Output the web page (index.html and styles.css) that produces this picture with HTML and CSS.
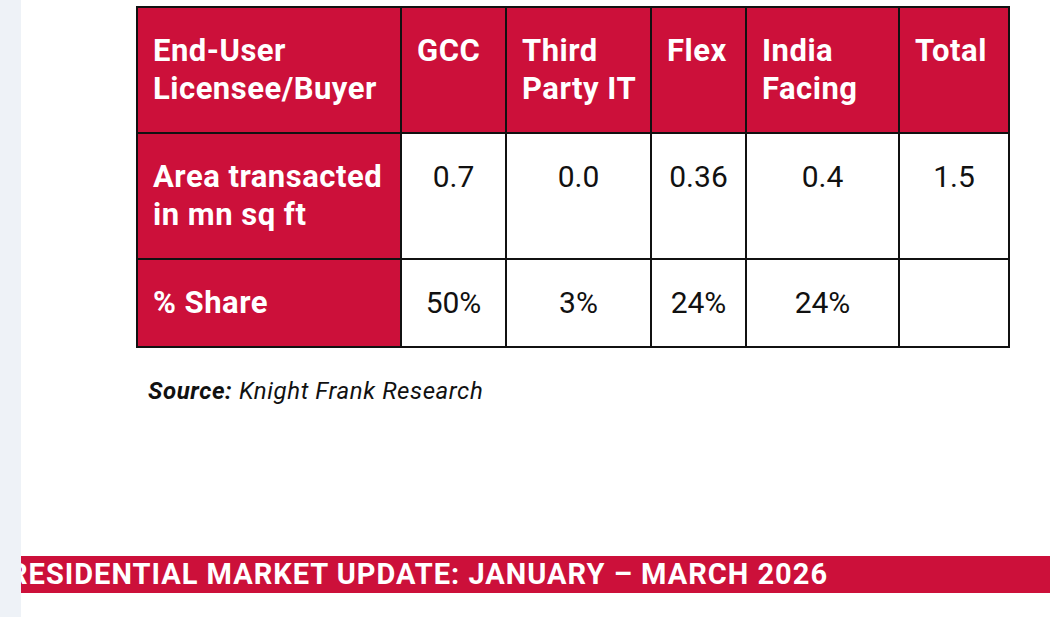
FILE: index.html
```html
<!DOCTYPE html>
<html lang="en">
<head>
<meta charset="utf-8">
<title>Office Market Table</title>
<link rel="stylesheet" href="styles.css">
</head>
<body>
<div class="page">
  <aside class="rail"></aside>
  <main class="content">
    <table class="data-table">
      <colgroup>
        <col class="c1"><col class="c2"><col class="c3"><col class="c4"><col class="c5"><col class="c6">
      </colgroup>
      <tr class="head-row">
        <th class="label">End-User<br>Licensee/Buyer</th>
        <th>GCC</th>
        <th>Third<br>Party IT</th>
        <th>Flex</th>
        <th>India<br>Facing</th>
        <th>Total</th>
      </tr>
      <tr class="row-tall">
        <th class="label">Area transacted<br>in mn sq ft</th>
        <td>0.7</td>
        <td>0.0</td>
        <td>0.36</td>
        <td>0.4</td>
        <td>1.5</td>
      </tr>
      <tr class="row-short">
        <th class="label">% Share</th>
        <td>50%</td>
        <td>3%</td>
        <td>24%</td>
        <td>24%</td>
        <td></td>
      </tr>
    </table>
    <p class="source"><strong>Source:</strong> Knight Frank Research</p>
    <div class="banner"><span class="banner-text">RESIDENTIAL MARKET UPDATE: JANUARY – MARCH 2026</span></div>
  </main>
</div>
</body>
</html>
```
FILE: styles.css
```css
html, body {
  margin: 0;
  padding: 0;
  background: #ffffff;
  font-family: Roboto, "Liberation Sans", sans-serif;
}
.page {
  display: flex;
  width: 1050px;
  height: 617px;
  overflow: hidden;
}
.rail {
  width: 21px;
  flex: 0 0 21px;
  background: #eef2f7;
}
.content {
  flex: 1;
  overflow: hidden;
  padding-top: 6px;
}
.data-table {
  margin-left: 115px;
  border-collapse: collapse;
  table-layout: fixed;
  width: 872px;
}
.c1 { width: 264px; }
.c2 { width: 105px; }
.c3 { width: 145px; }
.c4 { width: 95px; }
.c5 { width: 153px; }
.c6 { width: 110px; }
.data-table th,
.data-table td {
  border: 2px solid #111111;
  padding: 24px 10px 24px 15px;
  vertical-align: top;
  line-height: 38px;
}
.data-table th {
  background: #cc103a;
  color: #ffffff;
  font-size: 31px;
  font-weight: 700;
  letter-spacing: 0.5px;
  text-align: left;
}
.data-table td {
  background: #ffffff;
  color: #111111;
  font-size: 30px;
  font-weight: 400;
  text-align: center;
  padding-left: 4px;
  padding-right: 4px;
}
.head-row th,
.row-tall th,
.row-tall td {
  height: 76px;
}
.row-short th,
.row-short td {
  height: 38px;
}
.source {
  margin: 29px 0 0 127px;
  font-size: 24px;
  line-height: 28px;
  letter-spacing: 0.6px;
  font-style: italic;
  color: #111111;
}
.source strong {
  font-weight: 700;
}
.banner {
  margin-top: 151px;
  height: 37px;
  background: #cc103a;
  display: flex;
  align-items: center;
}
.banner-text {
  display: block;
  margin-left: -12px;
  color: #ffffff;
  font-weight: 700;
  font-size: 29px;
  letter-spacing: 1px;
  line-height: 37px;
  white-space: nowrap;
}
```
